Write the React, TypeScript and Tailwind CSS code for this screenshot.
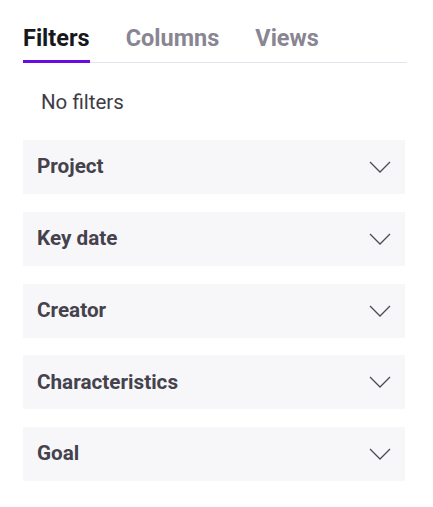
const sections = ["Project", "Key date", "Creator", "Characteristics", "Goal"]

function Chevron() {
  return (
    <svg width="22" height="12" viewBox="0 0 22 12" fill="none" className="text-[#4b4956]">
      <polyline points="1,1 11,11 21,1" stroke="currentColor" strokeWidth="1.25" />
    </svg>
  )
}

export default function App() {
  return (
    <div className="min-h-screen bg-white pt-[22px] pl-[23px] pr-[26px] font-['Roboto',sans-serif]">
      <div className="flex gap-[36px] border-b border-[#e6e3ee]">
        <div className="flex flex-col">
          <span className="text-[23.5px] leading-[32px] font-bold text-[#18171c]">Filters</span>
          <div className="mt-[6px] h-[3px] -mb-px bg-[#6a0be0]" />
        </div>
        <span className="text-[23.5px] leading-[32px] font-bold text-[#8a8593]">Columns</span>
        <span className="text-[23.5px] leading-[32px] font-bold text-[#8a8593]">Views</span>
      </div>

      <p className="mt-[27px] pl-[18px] text-[20.5px] leading-[24px] text-[#3e3c45]">No filters</p>

      <div className="mt-[26px] mr-[2px] flex flex-col gap-[17.75px]">
        {sections.map((s) => (
          <div key={s} className="flex h-[54px] items-center justify-between bg-[#f7f7f9] pl-[14px] pr-[14px]">
            <span className="text-[20.7px] font-bold text-[#45424d]">{s}</span>
            <Chevron />
          </div>
        ))}
      </div>
    </div>
  )
}
